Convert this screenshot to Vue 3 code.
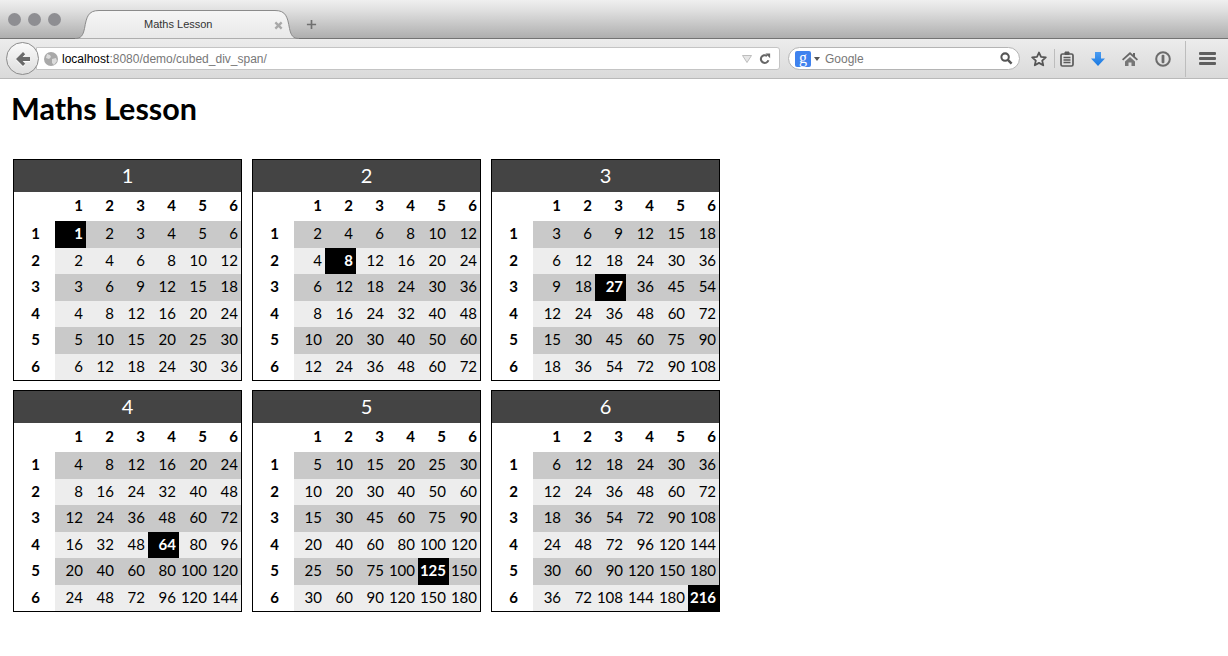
<template>
  <div class="window">
    <div class="tabbar">
      <div class="lights"><i></i><i></i><i></i></div>
      <div class="tab">
        <svg class="tab-bg" viewBox="0 0 224 29" width="224" height="29">
          <defs>
            <linearGradient id="tabGrad" x1="0" y1="0" x2="0" y2="1">
              <stop offset="0" stop-color="#f6f6f6"/>
              <stop offset="1" stop-color="#e8e8e8"/>
            </linearGradient>
          </defs>
          <path d="M0 28.500c6 0 8-3 9.500-10C11.500 7 13 .5 24 .5h176c11 0 12.500 6.500 14.500 18 1.500 7 3.500 10 9.500 10" fill="url(#tabGrad)" stroke="#8b8b8b"/>
        </svg>
        <span class="tab-title">Maths Lesson</span>
        <svg class="tab-close" viewBox="0 0 10 10" width="9" height="9">
          <path d="M1.500 1.500l7 7M8.500 1.500l-7 7" stroke="#a8a8a8" stroke-width="2.600"/>
        </svg>
      </div>
      <svg class="new-tab" viewBox="0 0 12 12" width="11" height="11">
        <path d="M6 1v10M1 6h10" stroke="#6f6f6f" stroke-width="1.800"/>
      </svg>
    </div>

    <div class="toolbar">
      <div class="back">
        <svg viewBox="0 0 14 14" width="14" height="14">
          <path d="M7 0L0 7l7 7 2.200-2.200L6.600 9H14V5H6.600l2.600-2.800z" fill="#6a6a6a"/>
        </svg>
      </div>
      <div class="url">
        <svg class="globe" viewBox="0 0 14 14" width="14" height="14">
          <circle cx="7" cy="7" r="7" fill="#a9a9a9"/>
          <path d="M3 2l3 1 1 2-2 2-3-1zM8 7l4-1 1 3-3 4-2-2z" fill="#dcdcdc"/>
        </svg>
        <span class="url-text"><b>localhost</b>:8080/demo/cubed_div_span/</span>
        <svg class="url-drop" viewBox="0 0 10 8" width="10" height="8">
          <path d="M.5.500h9L5 7.500z" fill="#e6e6e6" stroke="#bdbdbd"/>
        </svg>
        <svg class="reload" viewBox="0 0 14 14" width="12" height="12">
          <path d="M11 8.500A4.500 4.500 0 1 1 9.500 3.500" fill="none" stroke="#666" stroke-width="2.400"/>
          <path d="M7.500 0.500L13 .5V6z" fill="#666"/>
        </svg>
      </div>
      <div class="search">
        <div class="g-badge">g</div>
        <span class="caret"></span>
        <span class="search-text">Google</span>
        <svg viewBox="0 0 14 14" width="13" height="13">
          <circle cx="5.500" cy="5.500" r="4" fill="none" stroke="#555" stroke-width="2.200"/>
          <path d="M8.500 8.500l4 4" stroke="#555" stroke-width="2.600"/>
        </svg>
      </div>
      <div class="tools">
        <svg class="t-star" viewBox="0 0 16 16" width="16" height="16">
          <path d="M8 1.500l2 4.400 4.800.5-3.600 3.200 1 4.700L8 11.900l-4.200 2.400 1-4.700L1.200 6.400 6 5.900z" fill="#ececec" stroke="#555" stroke-width="1.800" stroke-linejoin="round"/>
        </svg>
        <span class="t-sep"></span>
        <svg class="t-clip" viewBox="0 0 14 16" width="14" height="16">
          <rect x="1" y="3" width="12" height="12" rx="1.500" fill="none" stroke="#5a5a5a" stroke-width="1.700"/>
          <path d="M5 1h4v2.500H5z" fill="#5a5a5a" stroke="#5a5a5a"/>
          <path d="M3.500 6.500h7M3.500 9h7M3.500 11.500h7" fill="none" stroke="#5a5a5a" stroke-width="1.300"/>
        </svg>
        <svg class="t-down" viewBox="0 0 14 14" width="14" height="14">
          <defs>
            <linearGradient id="downGrad" x1="0" y1="0" x2="0" y2="1">
              <stop offset="0" stop-color="#4a9cf2"/>
              <stop offset="1" stop-color="#1a78e0"/>
            </linearGradient>
          </defs>
          <path d="M4 0h6v6.500h4L7 14 0 6.500h4z" fill="url(#downGrad)"/>
        </svg>
        <svg class="t-home" viewBox="0 0 16 14" width="16" height="14">
          <path d="M8 0L0 7.200l1.200 1.200L8 2.600l6.800 5.800L16 7.200l-3-2.700V1h-2v1.700z" fill="#666"/>
          <path d="M3 9.500L8 5l5 4.500V14H9.500v-3.500h-3V14H3z" fill="#777"/>
        </svg>
        <svg class="t-lock" viewBox="0 0 16 16" width="16" height="16">
          <circle cx="8" cy="8" r="6.800" fill="none" stroke="#6c6c6c" stroke-width="2"/>
          <rect x="6.600" y="3.800" width="2.800" height="8.400" rx="1" fill="#6c6c6c"/>
        </svg>
        <span class="t-sep tall"></span>
        <div class="burger"><i></i><i></i><i></i></div>
      </div>
    </div>

    <main class="page">
      <h1>Maths Lesson</h1>
      <div class="cards">
        <table v-for="n in sizes" :key="n" class="card">
          <colgroup>
            <col class="side-col" />
            <col v-for="c in sizes" :key="c" class="num-col" />
          </colgroup>
          <thead>
            <tr class="title"><th colspan="7"><span>{{ n }}</span></th></tr>
            <tr class="heads">
              <th></th>
              <th v-for="c in sizes" :key="c">{{ c }}</th>
            </tr>
          </thead>
          <tbody>
            <tr v-for="r in sizes" :key="r" :class="r % 2 ? 'odd' : 'even'">
              <th class="side">{{ r }}</th>
              <td v-for="c in sizes" :key="c" :class="{ cube: r === n && c === n }">{{ r * c * n }}</td>
            </tr>
          </tbody>
        </table>
      </div>
    </main>
  </div>
</template>

<script setup>
const sizes = [1, 2, 3, 4, 5, 6]
</script>

<style>
html, body {
  margin: 0;
  background: #fff;
}
</style>

<style scoped>
.window {
  width: 1228px;
  height: 656px;
  overflow: hidden;
  font-family: "Liberation Sans", Arial, sans-serif;
}

.tabbar {
  display: flex;
  align-items: flex-end;
  height: 38px;
  background: linear-gradient(#efefef, #dedede 30%, #aeaeae);
  border-bottom: 1px solid #737373;
}

.lights {
  display: flex;
  gap: 7px;
  align-self: flex-start;
  box-sizing: border-box;
  padding: 13px 0 0 8px;
  width: 75px;
}

.lights i {
  width: 13px;
  height: 13px;
  border-radius: 50%;
  background: #8e8e92;
}

.tab {
  position: relative;
  width: 224px;
  height: 29px;
  margin-bottom: -1px;
  display: flex;
  align-items: center;
}

.tab-bg {
  position: absolute;
  left: 0;
  top: 0;
}

.tab-title {
  position: relative;
  top: -1px;
  margin-left: 69px;
  font-size: 11px;
  color: #333;
}

.tab-close {
  position: absolute;
  left: 199px;
  top: 11px;
}

.new-tab {
  margin: 0 0 8px 7px;
}

.toolbar {
  display: flex;
  align-items: center;
  height: 40px;
  background: linear-gradient(#ececec, #dadada);
  border-bottom: 1px solid #b9b9b9;
  box-sizing: border-box;
  padding: 0 0 0 6px;
}

.back {
  width: 31px;
  height: 31px;
  border-radius: 50%;
  border: 1px solid #8c8c8c;
  background: linear-gradient(#fafafa, #dedede);
  display: flex;
  align-items: center;
  justify-content: center;
  flex: none;
  position: relative;
  z-index: 1;
}

.back svg {
  filter: drop-shadow(0 1px 0 #fff);
}

.url {
  width: 744px;
  height: 23px;
  margin-left: -3px;
  box-sizing: border-box;
  background: #fff;
  border: 1px solid #c4c4c4;
  border-radius: 0 3px 3px 0;
  display: flex;
  align-items: center;
  padding: 0 8px 0 7px;
}

.url-text {
  margin-left: 4px;
  font-size: 12px;
  color: #777;
  flex: 1;
}

.url-text b {
  font-weight: normal;
  color: #000;
}

.reload {
  margin-left: 7px;
}

.search {
  width: 232px;
  height: 23px;
  margin-left: 8px;
  box-sizing: border-box;
  background: #fff;
  border: 1px solid #b4b4b4;
  border-radius: 12px;
  display: flex;
  align-items: center;
  padding: 0 6px;
}

.g-badge {
  width: 16px;
  height: 16px;
  border-radius: 2px;
  background: #3f82ee;
  color: #fff;
  font-family: "Liberation Serif", serif;
  font-size: 16px;
  line-height: 13px;
  text-align: center;
}

.caret {
  width: 0;
  height: 0;
  margin-left: 3px;
  border: 3px solid transparent;
  border-top: 4px solid #555;
  border-bottom: 0;
}

.search-text {
  flex: 1;
  margin-left: 5px;
  font-size: 12px;
  color: #777;
}

.tools {
  display: flex;
  align-items: center;
  flex: 1;
  align-self: stretch;
}

.tools > * {
  flex: none;
}

.t-star { margin-left: 11px; }
.t-sep { margin-left: 7px; width: 1px; height: 19px; background: #bdbdbd; }
.t-sep.tall { margin-left: 14px; height: 36px; }
.t-clip { margin-left: 5px; }
.t-down { margin-left: 17px; }
.t-home { margin-left: 17px; }
.t-lock { margin-left: 17px; }

.burger {
  margin-left: 13px;
  width: 17px;
  display: flex;
  flex-direction: column;
  gap: 2px;
}

.burger i {
  height: 3px;
  background: #5f5f5f;
  border-radius: 1px;
}

.page {
  padding: 12px 0 0 13px;
  font-family: "Lato", "Open Sans", sans-serif;
}

h1 {
  margin: 0 0 34px -2px;
  font-size: 30.500px;
  line-height: 34px;
  font-weight: 700;
  color: #000;
}

.cards {
  display: flex;
  flex-wrap: wrap;
  gap: 9px 10px;
  width: 720px;
}

.card {
  width: 229px;
  border: 1px solid #000;
  border-collapse: separate;
  border-spacing: 0;
  table-layout: fixed;
  font-size: 15px;
}

.side-col { width: 41px; }
.num-col { width: 31px; }

.title th {
  height: 32px;
  padding: 0 0 3px;
  box-sizing: border-box;
  background: #444;
  color: #fff;
  font-size: 20px;
  font-weight: 400;
  text-align: center;
}

.heads th {
  height: 29px;
  padding: 0 3px 4px 0;
  box-sizing: border-box;
  text-align: right;
  font-weight: 700;
}

th.side {
  height: 26.500px;
  padding: 0 15px 2px 0;
  box-sizing: border-box;
  font-weight: 700;
  text-align: right;
  background: #fff;
}

td {
  height: 26.500px;
  padding: 0 3px 2px 0;
  box-sizing: border-box;
  text-align: right;
}

.odd td { background: #c9c9c9; }
.even td { background: #ededed; }

td.cube,
.odd td.cube,
.even td.cube {
  background: #000;
  color: #fff;
  font-weight: 700;
}
</style>
